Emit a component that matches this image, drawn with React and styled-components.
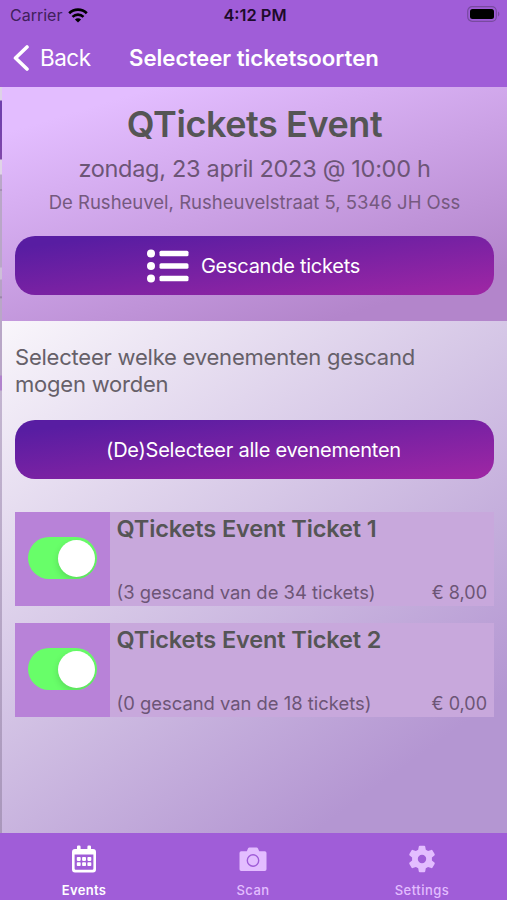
import React, { useState } from "react";
import styled, { createGlobalStyle } from "styled-components";

const GlobalStyle = createGlobalStyle`
  * {
    box-sizing: border-box;
  }

  body {
    margin: 0;
    font-family: Inter, "Liberation Sans", sans-serif;
    color: #555;
  }
`;

const Screen = styled.div`
  width: 507px;
  height: 900px;
  display: flex;
  flex-direction: column;
  overflow: hidden;
`;

const Text = styled.div`
  font-size: ${(p) => p.$size}px;
  line-height: ${(p) => p.$line}px;
  font-weight: ${(p) => p.$weight || 400};
  letter-spacing: ${(p) => p.$spacing || 0}px;
  color: ${(p) => p.$color || "inherit"};
  white-space: nowrap;
`;

const StatusBar = styled.div`
  height: 30px;
  flex: none;
  display: grid;
  grid-template-columns: 1fr auto 1fr;
  align-items: center;
  padding: 0 7px 0 10px;
  background: #a05dd8;
  color: #1d0b2b;
`;

const Carrier = styled.div`
  display: flex;
  align-items: center;
  gap: 6px;
`;

const Battery = styled.svg`
  justify-self: end;
  margin-top: -3px;
`;

const NavBar = styled.div`
  height: 57px;
  flex: none;
  display: flex;
  align-items: center;
  padding: 0 0 2px 13px;
  background: #a05dd8;
  color: #fff;
`;

const BackButton = styled.div`
  width: 116px;
  display: flex;
  align-items: center;
  gap: 11px;
`;

const Content = styled.div`
  flex: 1;
  display: flex;
`;

// sliver of the previous screen, still visible on the left
const PreviousScreen = styled.div`
  width: 2px;
  flex: none;
  background: linear-gradient(
    #ddd2e6 0 13px,
    #7040ac 14px 30px,
    #8048aa 72px,
    #dfd4e6 73px 87px,
    #baa8c8 88px 102px,
    #917ba0 103px,
    #b9a7c7 104px 180px,
    #cdbfd8 181px 192px,
    #b6a2c5 193px 209px,
    #917ba0 210px,
    #b9a7c7 212px 288px,
    #b183cc 289px 303px,
    #c3b5d0 304px,
    #a997bb
  );
`;

const Page = styled.div`
  flex: 1;
  min-width: 0;
  display: flex;
  flex-direction: column;
`;

const EventHeader = styled.div`
  height: 234px;
  flex: none;
  display: flex;
  flex-direction: column;
  align-items: center;
  padding: 14px 13px 0;
  background: linear-gradient(163deg, #e3bdff 12%, #b385cb 86%);
`;

const Button = styled.button`
  width: 479px;
  height: 59px;
  flex: none;
  display: flex;
  align-items: center;
  justify-content: center;
  gap: 12px;
  border: 0;
  padding: 0 2px 0 0;
  border-radius: 20px;
  font-family: inherit;
  color: #fff;
  background: linear-gradient(to bottom right, #581da2 10%, #9c26a4 95%);
  margin-top: ${(p) => p.$top}px;
`;

const TicketSection = styled.div`
  flex: 1;
  padding: 23px 13px 0;
  background: linear-gradient(144deg, #f9f6fb, #d5c6e6 43%, #b496d2 84%);
`;

const TicketList = styled.div`
  display: flex;
  flex-direction: column;
  gap: 17px;
  margin-top: 33px;
`;

const TicketRow = styled.div`
  display: flex;
  height: 94px;
  background: #c8a8dc;
`;

const ToggleCell = styled.div`
  width: 94.5px;
  flex: none;
  display: flex;
  align-items: center;
  justify-content: center;
  background: #b882d8;
`;

const Switch = styled.button`
  width: 69px;
  height: 42px;
  display: flex;
  align-items: center;
  justify-content: ${(p) => (p.$on ? "flex-end" : "flex-start")};
  border: 0;
  padding: 0 2px;
  border-radius: 21px;
  overflow: hidden;
  margin-top: -2px;
  background: ${(p) => (p.$on ? "#68fe69" : "#e9e9ea")};
`;

const Knob = styled.span`
  width: 37px;
  height: 37px;
  border-radius: 50%;
  background: #fff;
  box-shadow: 0 3px 7px rgba(0, 0, 0, 0.14);
`;

const TicketInfo = styled.div`
  flex: 1;
  display: flex;
  flex-direction: column;
  justify-content: space-between;
  padding: 3px 7px 0;
`;

const TicketMeta = styled.div`
  display: flex;
  justify-content: space-between;
  align-items: baseline;
  color: #6c5576;
`;

const TabBar = styled.div`
  height: 67px;
  flex: none;
  display: grid;
  grid-template-columns: repeat(3, 1fr);
  background: #a05dd8;
`;

const Tab = styled.div`
  display: flex;
  flex-direction: column;
  align-items: center;
  padding: 10px 1px 0 0;
  gap: 6px;
  color: ${(p) => (p.$active ? "#fff" : "#e3bdff")};
`;

const WifiIcon = () => (
  <svg width="20" height="15" viewBox="0 0 20 15" fill="none">
    <path d="M1.2 5.3a12.6 12.6 0 0 1 17.6 0" stroke="#000" strokeWidth="2.7" />
    <path d="M4.5 8.9a7.9 7.9 0 0 1 11 0" stroke="#000" strokeWidth="2.6" />
    <path d="M10 14.6 6.9 11.5a4.4 4.4 0 0 1 6.2 0z" fill="#000" />
  </svg>
);

const BackIcon = () => (
  <svg width="16" height="26" viewBox="0 0 16 26" fill="none">
    <path
      d="M14 2 2.5 13 14 24"
      stroke="#fff"
      strokeWidth="3.6"
      strokeLinecap="round"
      strokeLinejoin="round"
    />
  </svg>
);

const ListIcon = () => (
  <svg width="42" height="34" viewBox="0 0 42 34" fill="#fff">
    {[4.5, 17, 29.5].map((y) => (
      <g key={y}>
        <circle cx="4" cy={y} r="4" />
        <rect x="12.5" y={y - 2.8} width="29" height="5.6" rx="1.6" />
      </g>
    ))}
  </svg>
);

const CalendarIcon = () => (
  <svg width="26" height="28" viewBox="0 0 26 28" fill="currentColor">
    <path
      fillRule="evenodd"
      d="M6 1.8a1.2 1.2 0 0 1 1.2-1.2h1.2a1.2 1.2 0 0 1 1.2 1.2V4h6.8V1.8A1.2 1.2 0 0 1 17.6.6h1.2a1.2 1.2 0 0 1 1.2 1.2V4h2a3 3 0 0 1 3 3v17.5a3 3 0 0 1-3 3H4a3 3 0 0 1-3-3V7a3 3 0 0 1 3-3h2zM3.6 9.5v14a1.2 1.2 0 0 0 1.2 1.2h16.4a1.2 1.2 0 0 0 1.2-1.2v-14z"
    />
    {[12, 17.2].map((y) =>
      [5.8, 11.1, 16.4].map((x) => (
        <rect key={`${x}-${y}`} x={x} y={y} width="3.9" height="3.9" rx="0.8" />
      ))
    )}
  </svg>
);

const CameraIcon = () => (
  <svg width="28" height="28" viewBox="0 0 28 28">
    <path
      fill="currentColor"
      d="M2.2 6.2h5.6l1.2-2.6a1.6 1.6 0 0 1 1.5-1h7a1.6 1.6 0 0 1 1.5 1l1.2 2.6h5.6A1.7 1.7 0 0 1 27.5 7.9v16.4a1.7 1.7 0 0 1-1.7 1.7H2.2a1.7 1.7 0 0 1-1.7-1.7V7.9a1.7 1.7 0 0 1 1.7-1.7z"
    />
    <circle cx="14" cy="15.5" r="5.7" fill="none" stroke="#a05dd8" strokeWidth="1.4" />
  </svg>
);

const SettingsIcon = () => (
  <svg width="32" height="32" viewBox="0 0 32 32" fill="currentColor">
    <path
      fillRule="evenodd"
      d="M12.8 3.5a1 1 0 0 1 1-.8h4.4a1 1 0 0 1 1 .8l.6 3.2 2.3 1.3 3.1-1.1a1 1 0 0 1 1.2.4l2.2 3.8a1 1 0 0 1-.2 1.3L25.9 14.6v2.8l2.5 2.2a1 1 0 0 1 .2 1.3l-2.2 3.8a1 1 0 0 1-1.2.4l-3.1-1.1-2.3 1.3-.6 3.2a1 1 0 0 1-1 .8h-4.4a1 1 0 0 1-1-.8l-.6-3.2-2.3-1.3-3.1 1.1a1 1 0 0 1-1.2-.4l-2.2-3.8a1 1 0 0 1 .2-1.3l2.5-2.2v-2.8l-2.5-2.2a1 1 0 0 1-.2-1.3l2.2-3.8a1 1 0 0 1 1.2-.4l3.1 1.1 2.3-1.3zM16 11.8a4.2 4.2 0 1 0 0 8.4 4.2 4.2 0 0 0 0-8.4z"
    />
  </svg>
);

const IconBox = styled.div`
  height: 32px;
  display: flex;
  align-items: center;
`;

const tickets = [
  { name: "QTickets Event Ticket 1", scanned: "(3 gescand van de 34 tickets)", price: "€ 8,00" },
  { name: "QTickets Event Ticket 2", scanned: "(0 gescand van de 18 tickets)", price: "€ 0,00" },
];

const Ticket = ({ name, scanned, price }) => {
  const [on, setOn] = useState(true);
  return (
    <TicketRow>
      <ToggleCell>
        <Switch $on={on} onClick={() => setOn(!on)} aria-label={name}>
          <Knob />
        </Switch>
      </ToggleCell>
      <TicketInfo>
        <Text $size={23.5} $line={28} $weight={600} $spacing={-0.12}>
          {name}
        </Text>
        <TicketMeta>
          <Text $size={18.4} $line={26}>
            {scanned}
          </Text>
          <Text $size={18} $line={26}>
            {price}
          </Text>
        </TicketMeta>
      </TicketInfo>
    </TicketRow>
  );
};

export default function App() {
  return (
    <Screen>
      <GlobalStyle />
      <StatusBar>
        <Carrier>
          <Text $size={16} $line={30} $color="#40205c">
            Carrier
          </Text>
          <WifiIcon />
        </Carrier>
        <Text $size={16.4} $line={30} $weight={600}>
          4:12 PM
        </Text>
        <Battery width="33" height="16" viewBox="0 0 33 16">
          <rect x="0.7" y="0.7" width="28.6" height="14.6" rx="4.5" fill="none" stroke="#784a9f" strokeWidth="1.2" />
          <rect x="3" y="3" width="24" height="10" rx="2.5" fill="#000" />
          <path d="M31 5.5c1.8.8 1.8 4.2 0 5z" fill="#784a9f" />
        </Battery>
      </StatusBar>
      <NavBar>
        <BackButton>
          <BackIcon />
          <Text $size={22.5} $line={30} $spacing={-0.5}>
            Back
          </Text>
        </BackButton>
        <Text $size={22.2} $line={30} $weight={600}>
          Selecteer ticketsoorten
        </Text>
      </NavBar>
      <Content>
        <PreviousScreen />
        <Page>
          <EventHeader>
            <Text $size={36} $line={46} $weight={600} $spacing={-0.42}>
              QTickets Event
            </Text>
            <Text $size={23.5} $line={44} $spacing={-0.3} $color="#6c5576">
              zondag, 23 april 2023 @ 10:00 h
            </Text>
            <Text $size={18.5} $line={23} $color="#75597f">
              De Rusheuvel, Rusheuvelstraat 5, 5346 JH Oss
            </Text>
            <Button $top={22}>
              <ListIcon />
              <Text $size={20} $line={26} $spacing={-0.25}>
                Gescande tickets
              </Text>
            </Button>
          </EventHeader>
          <TicketSection>
            <Text $size={22} $line={27} $spacing={-0.22} $color="#666069">
              Selecteer welke evenementen gescand
              <br />
              mogen worden
            </Text>
            <Button $top={22}>
              <Text $size={20} $line={26} $spacing={-0.24}>
                (De)Selecteer alle evenementen
              </Text>
            </Button>
            <TicketList>
              {tickets.map((ticket) => (
                <Ticket key={ticket.name} {...ticket} />
              ))}
            </TicketList>
          </TicketSection>
        </Page>
      </Content>
      <TabBar>
        <Tab $active>
          <IconBox>
            <CalendarIcon />
          </IconBox>
          <Text $size={13} $line={18} $weight={600} $spacing={0.3}>
            Events
          </Text>
        </Tab>
        <Tab>
          <IconBox>
            <CameraIcon />
          </IconBox>
          <Text $size={13} $line={18} $weight={500} $spacing={0.5}>
            Scan
          </Text>
        </Tab>
        <Tab>
          <IconBox>
            <SettingsIcon />
          </IconBox>
          <Text $size={13} $line={18} $weight={500} $spacing={0.5}>
            Settings
          </Text>
        </Tab>
      </TabBar>
    </Screen>
  );
}
